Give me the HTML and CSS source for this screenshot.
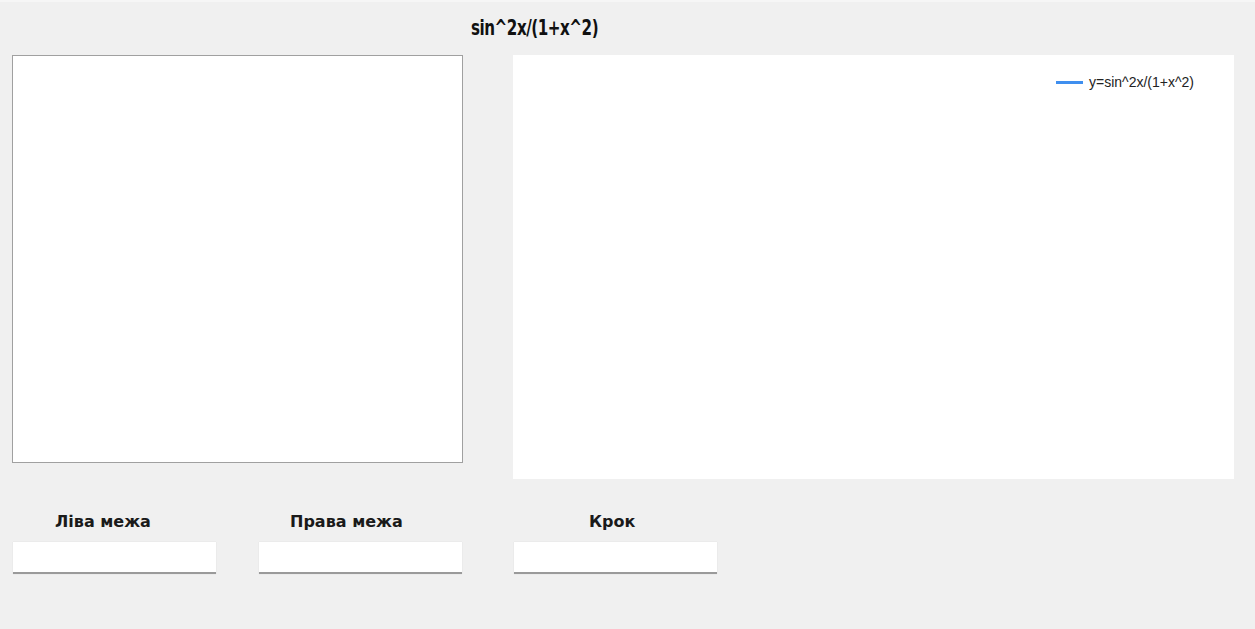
FILE: index.html
```html
<!DOCTYPE html>
<html lang="uk">
<head>
<meta charset="utf-8">
<title>sin^2x/(1+x^2)</title>
<link rel="stylesheet" href="styles.css">
</head>
<body>
<div class="window">
  <header class="header">
    <h1 class="title">sin^2x/(1+x^2)</h1>
  </header>
  <section class="main">
    <div class="listbox"></div>
    <div class="chart">
      <div class="legend">
        <span class="legend-line"></span>
        <span class="legend-text">y=sin^2x/(1+x^2)</span>
      </div>
    </div>
  </section>
  <section class="controls">
    <div class="field field-left">
      <label class="label">Ліва межа</label>
      <input class="input" type="text">
    </div>
    <div class="field field-right">
      <label class="label">Права межа</label>
      <input class="input" type="text">
    </div>
    <div class="field field-step">
      <label class="label">Крок</label>
      <input class="input" type="text">
    </div>
  </section>
</div>
</body>
</html>
```
FILE: styles.css
```css
html, body {
  margin: 0;
  padding: 0;
}
body {
  background: #f0f0f0;
  width: 1255px;
  height: 629px;
  overflow: hidden;
  font-family: "DejaVu Sans", sans-serif;
  color: #111;
}
.window {
  display: flex;
  flex-direction: column;
  height: 629px;
  border-top: 2px solid #f6f6f6;
  box-sizing: border-box;
}
.header {
  height: 53px;
  display: flex;
  align-items: center;
  padding-left: 471px;
  box-sizing: border-box;
}
.title {
  margin: 0;
  font-family: "DejaVu Sans Condensed", "DejaVu Sans", sans-serif;
  font-size: 22px;
  font-weight: 700;
  letter-spacing: -0.6px;
  line-height: 1;
  padding-bottom: 2px;
  transform: scaleX(0.765);
  transform-origin: left center;
  white-space: nowrap;
}
.main {
  display: flex;
  align-items: flex-start;
  padding-left: 12px;
}
.listbox {
  width: 451px;
  height: 408px;
  background: #fff;
  border: 1px solid #a0a0a0;
  box-sizing: border-box;
}
.chart {
  margin-left: 50px;
  width: 721px;
  height: 424px;
  background: #fff;
  position: relative;
}
.legend {
  position: absolute;
  left: 543px;
  top: 19px;
  display: flex;
  align-items: center;
  gap: 6px;
}
.legend-line {
  width: 27px;
  height: 3px;
  background: #3f8fef;
}
.legend-text {
  font-family: "Liberation Sans", Arial, sans-serif;
  font-size: 14px;
  letter-spacing: 0;
  color: #222;
}
.controls {
  display: flex;
  padding-left: 13px;
  margin-top: 35px;
}
.field {
  display: flex;
  flex-direction: column;
  width: 203px;
}
.field-right {
  margin-left: 43px;
}
.field-step {
  margin-left: 52px;
}
.label {
  font-size: 16px;
  font-weight: 700;
  height: 28px;
  line-height: 16px;
  color: #1a1a1a;
  padding-left: 42px;
}
.field-right .label {
  padding-left: 31px;
}
.field-step .label {
  padding-left: 75px;
}
.input {
  width: 203px;
  height: 32px;
  margin: 0;
  border: none;
  border-bottom: 2px solid #9a9a9a;
  background: #fff;
  box-sizing: border-box;
  outline: none;
  box-shadow: 0 0 1px rgba(0,0,0,0.12);
}
```
